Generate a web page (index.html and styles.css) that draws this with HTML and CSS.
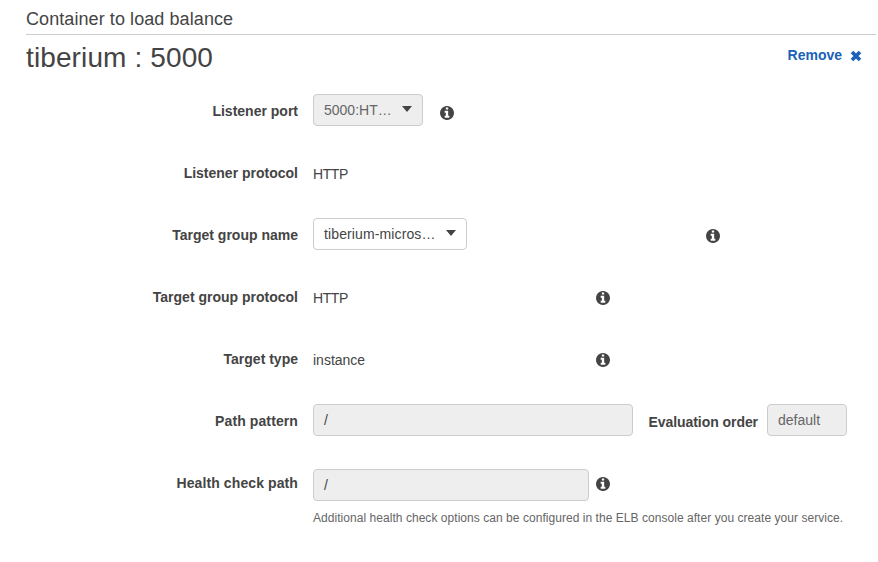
FILE: index.html
```html
<!DOCTYPE html>
<html lang="en">
<head>
<meta charset="utf-8">
<title>Container to load balance</title>
<link rel="stylesheet" href="styles.css">
</head>
<body>
<svg width="0" height="0" class="defs" aria-hidden="true">
  <symbol id="info" viewBox="0 128 1536 1536"><path d="M1024 1376v-160q0-14-9-23t-23-9h-96v-512q0-14-9-23t-23-9h-320q-14 0-23 9t-9 23v160q0 14 9 23t23 9h96v320h-96q-14 0-23 9t-9 23v160q0 14 9 23t23 9h448q14 0 23-9t9-23zm-128-896v-160q0-14-9-23t-23-9h-192q-14 0-23 9t-9 23v160q0 14 9 23t23 9h192q14 0 23-9t9-23zm640 416q0 209-103 385.5t-279.5 279.5-385.5 103-385.5-103-279.5-279.5-103-385.5 103-385.5 279.5-279.5 385.5-103 385.5 103 279.5 279.5 103 385.5z"/></symbol>
</svg>
<main class="panel">
  <h2 class="section-title"><span>Container to load balance</span></h2>
  <header class="container-head">
    <h1 class="container-name">tiberium : 5000</h1>
    <a class="remove"><span>Remove</span><svg class="cross" viewBox="0 0 12 12"><path d="M2 2l8 8M10 2l-8 8"/></svg></a>
  </header>
  <div class="row">
    <span class="label">Listener port</span>
    <div class="field field-port"><div class="box select port disabled"><span>5000:HT…</span><i class="caret"></i></div><svg class="info"><use href="#info"/></svg></div>
  </div>
  <div class="row">
    <span class="label">Listener protocol</span>
    <div class="field"><span class="value http">HTTP</span></div>
  </div>
  <div class="row">
    <span class="label">Target group name</span>
    <div class="field field-wide"><div class="box select group"><span>tiberium-micros…</span><i class="caret"></i></div><svg class="info"><use href="#info"/></svg></div>
  </div>
  <div class="row">
    <span class="label">Target group protocol</span>
    <div class="field field-mid"><span class="value http">HTTP</span><svg class="info"><use href="#info"/></svg></div>
  </div>
  <div class="row">
    <span class="label">Target type</span>
    <div class="field field-mid"><span class="value">instance</span><svg class="info"><use href="#info"/></svg></div>
  </div>
  <div class="row">
    <span class="label label-path">Path pattern</span>
    <div class="field"><div class="box path disabled"><span class="slash">/</span></div><span class="label order-label">Evaluation order</span><div class="box order disabled"><span>default</span></div></div>
  </div>
  <div class="row row-health">
    <span class="label label-path">Health check path</span>
    <div class="field field-mid"><div class="box health disabled"><span class="slash">/</span></div><svg class="info"><use href="#info"/></svg></div>
  </div>
  <p class="hint"><span>Additional health check options can be configured in the ELB console after you create your service.</span></p>
</main>
</body>
</html>
```

FILE: styles.css
```css
* { box-sizing: border-box; }
body {
  margin: 0;
  background: #fff;
  color: #444;
  font: 14px/20px "Liberation Sans", Arial, sans-serif;
}
.defs { display: block; }
.panel { padding: 0 2px 0 26px; }
.section-title {
  height: 35px;
  margin: 0;
  padding-top: 9px;
  border-bottom: 1px solid #ccc;
  font-size: 18px;
  font-weight: 400;
  letter-spacing: 0.08px;
  line-height: 20px;
}
.container-head {
  display: flex;
  justify-content: space-between;
  height: 44px;
  padding-right: 14px;
}
.container-name {
  margin: 7px 0 0;
  font-size: 28px;
  font-weight: 400;
  letter-spacing: 0.12px;
  line-height: 32px;
}
.remove {
  display: flex;
  gap: 8px;
  height: 20px;
  margin-top: 10px;
  color: #1a5fb8;
  font-weight: 700;
}
.cross { width: 12px; height: 12px; margin-top: 5px; }
.cross path { stroke: currentColor; stroke-width: 3.6; fill: none; }
.row {
  display: grid;
  grid-template-columns: 272px 1fr;
  gap: 15px;
  align-items: center;
  height: 62px;
}
.label { font-weight: 700; text-align: right; padding-top: 2px; white-space: nowrap; }
.label-path { letter-spacing: 0.1px; }
.field { display: flex; align-items: center; }
.value { padding-top: 3px; }
.http { letter-spacing: -0.4px; }
.box {
  display: flex;
  align-items: center;
  height: 32px;
  padding: 0 10px;
  border: 1px solid #ccc;
  border-radius: 4px;
  white-space: nowrap;
}
.disabled { background: #eee; color: #666; }
.select { justify-content: space-between; }
.group { letter-spacing: 0.12px; }
.caret {
  border: 5.5px solid transparent;
  border-top: 6px solid #444;
  border-bottom: 0;
  margin-top: -2px;
}
.slash { color: #444; }
.port { width: 110px; }
.group { width: 154px; }
.path { width: 320px; }
.health { width: 276px; }
.order { width: 80px; }
.order-label { width: 110px; margin: 0 9px 0 15px; padding-top: 3px; letter-spacing: -0.06px; }
.info { width: 14px; height: 14px; margin-top: 4px; fill: #444; }
.field-port { gap: 17px; }
.field-port .info { margin-top: 6px; }
.field-wide { width: 407px; justify-content: space-between; }
.field-mid { width: 297px; justify-content: space-between; }
.row-health .field { padding-top: 6px; }
.row-health .info { margin-top: -2px; }
.hint { margin: -3px 0 0 287px; color: #666; font-size: 12px; line-height: 16px; letter-spacing: 0.045px; white-space: nowrap; }
```
